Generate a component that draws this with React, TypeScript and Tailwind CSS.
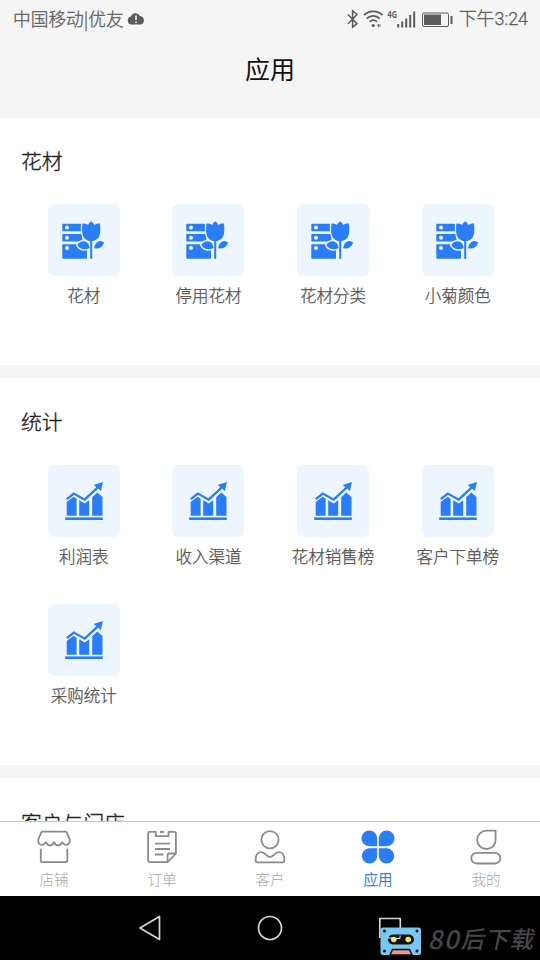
import type { ReactNode } from 'react';

type IconProps = { className?: string };

const flowerPaths = [
  'M29.300 41c1.800-2.800 4-3.900 6.600-3.700 3.200.3 5.200 3 5.700 6.800-4.900 2.300-9.700 1.500-12.300-3.100Z',
  'M56.200 38.600c-1.700-1.300-3.400-1.800-5.200-1.300-2.700.7-4.400 3.500-4.900 6.900 4.500 1.300 8.200-.5 10.100-5.600Z',
  'M43.200 17.200c1.600 1.200 2.600 2.400 3.100 3.700 1.500-1 3.300-1.400 5.700-1.400.4 3.700.4 6.800.1 9.500-.6 4.800-3.900 8.200-8.900 8.200s-8.300-3.400-8.900-8.200c-.3-2.700-.3-5.800.1-9.500 2.400 0 4.200.4 5.700 1.400.5-1.300 1.500-2.500 3.100-3.700Z',
  'M42.200 36h2v18.800h-2Z',
];

function FlowerIcon() {
  return (
    <svg viewBox="0 0 72 72" className="h-[72px] w-[72px]" fill="#2a7df5">
      <rect x="14.300" y="19.800" width="19" height="7.400" rx="0.800" />
      <rect x="14.300" y="30.100" width="20" height="7.400" rx="0.800" />
      <rect x="14.300" y="40.300" width="24.700" height="14.500" rx="0.800" />
      <g fill="#edf6ff">
        <circle cx="19" cy="23.600" r="2" />
        <circle cx="19" cy="33.800" r="2" />
        <circle cx="19" cy="43.900" r="2" />
      </g>
      <g stroke="#edf6ff" strokeWidth="2.600" strokeLinejoin="round">
        {flowerPaths.map((d) => (
          <path key={d} d={d} />
        ))}
      </g>
      {flowerPaths.map((d) => (
        <path key={d} d={d} />
      ))}
    </svg>
  );
}

function ChartIcon() {
  return (
    <svg viewBox="0 0 72 72" className="h-[72px] w-[72px]" fill="#2a7df5">
      <path d="M18.700 37 25.600 31.800l3 2V50.700h-9.900Z" />
      <path d="M31.200 35.300l5.500 3.200 4.500-3.200v15.400h-10Z" />
      <path d="M44.200 32.200l5.100-4.800 5.200 4.600v18.700H44.200Z" />
      <rect x="17.200" y="52.400" width="37.600" height="2.600" />
      <path d="M18.800 34.200 25.800 28.600 36.700 34.700 50.600 21.600" fill="none" stroke="#2a7df5" strokeWidth="2.300" />
      <path d="M54.900 17.100 45.700 20l7.300 5.900Z" />
    </svg>
  );
}

function ShopIcon({ className }: IconProps) {
  return (
    <svg viewBox="0 0 36 36" className={className} fill="none" stroke="currentColor" strokeWidth="1.800" strokeLinejoin="round" strokeLinecap="round">
      <path d="M6.700 2.700h22.600c.7 0 1.200.3 1.500.9l2.900 6.800c.6 3.500-1.200 5.400-3.500 5.400-1.800 0-3-1-4-2.600-1.400 2.300-2.500 3.300-4.100 3.300-1.700 0-2.800-1-4.100-3.300-1.300 2.300-2.400 3.300-4.100 3.300-1.600 0-2.700-1-4.100-3.300-1 1.600-2.200 2.600-4 2.600-2.300 0-4.100-1.900-3.500-5.400l2.900-6.800c.3-.6.800-.9 1.500-.9Z" />
      <path d="M4.800 20.500v11.500c0 .7.400 1.100 1.100 1.100h24.300c.7 0 1.100-.4 1.100-1.100V20.500" />
    </svg>
  );
}

function OrderIcon({ className }: IconProps) {
  return (
    <svg viewBox="0 0 36 36" className={className} fill="none" stroke="currentColor" strokeWidth="1.800" strokeLinejoin="round">
      <path d="M11.700 8V2.800H5.600c-1 0-1.500.5-1.500 1.500v27.300c0 1 .5 1.500 1.500 1.500h18l8.300-8.500V4.300c0-1-.5-1.500-1.500-1.500h-5.900V8M10.800 7.200h14.500M16 3h4" />
      <path d="M31.700 24.500h-6.600c-1 0-1.500.5-1.500 1.500v6.900M11 14.600h15M11 20h15M11 25.500h8.500" />
    </svg>
  );
}

function CustomerIcon({ className }: IconProps) {
  return (
    <svg viewBox="0 0 36 36" className={className} fill="none" stroke="currentColor" strokeWidth="1.800" strokeLinejoin="round">
      <circle cx="18" cy="10.700" r="8.600" />
      <path d="M9.300 23.200c3.800 0 5.200 4.900 8.700 4.900s4.900-4.900 8.700-4.900c3.400 0 5.600 3 5.600 6.500v2c0 1-.6 1.600-1.600 1.600H5.300c-1 0-1.600-.6-1.600-1.600v-2c0-3.500 2.200-6.500 5.600-6.500Z" />
    </svg>
  );
}

function AppsIcon({ className }: IconProps) {
  return (
    <svg viewBox="0 0 36 36" className={className} fill="currentColor">
      <path d="M17.200 17.200H9.100a7.900 7.900 0 1 1 8.100-7.900Z" />
      <path d="M18.800 17.200h8.100a7.900 7.900 0 1 0-8.100-7.900Z" />
      <path d="M17.200 19.200H9.100a7.700 7.700 0 1 0 8.100 7.700Z" />
      <path d="M18.800 19.200h8.100a7.700 7.700 0 1 1-8.100 7.700Z" />
    </svg>
  );
}

function MineIcon({ className }: IconProps) {
  return (
    <svg viewBox="0 0 36 36" className={className} fill="none" stroke="currentColor" strokeWidth="1.800" strokeLinejoin="round">
      <path d="M27.600 1.600V10.800a9.200 9.200 0 1 1-9.200-9.200Z" />
      <rect x="3.300" y="23.800" width="29" height="10.700" rx="5.350" />
    </svg>
  );
}

const sections = [
  { title: '花材', icon: <FlowerIcon />, size: 'h-[247px] pt-[26px]', items: ['花材', '停用花材', '花材分类', '小菊颜色'] },
  {
    title: '统计',
    icon: <ChartIcon />,
    size: 'h-[387px] pt-[27px]',
    items: ['利润表', '收入渠道', '花材销售榜', '客户下单榜', '采购统计'],
  },
];

const tabs = [
  { label: '店铺', Icon: ShopIcon },
  { label: '订单', Icon: OrderIcon },
  { label: '客户', Icon: CustomerIcon },
  { label: '应用', Icon: AppsIcon, active: true },
  { label: '我的', Icon: MineIcon },
];

function StatusBar() {
  return (
    <div className="flex h-[37px] items-center justify-between pr-3 pl-[13px] text-[#5c5c5c]">
      <div className="flex items-center gap-[3px]">
        <span className="text-[17.700px] leading-none font-light [-webkit-text-stroke:0.3px]">中国移动|优友</span>
        <svg viewBox="0 0 18 13" className="h-[13px] w-[18px]">
          <path d="M4.500 12.500a4 4 0 0 1-.6-7.900A5 5 0 0 1 13 3.900a4.400 4.400 0 0 1 .7 8.600Z" fill="currentColor" />
          <path d="M9 3.500v4.600M9 9.500v1.500" stroke="#f5f5f5" strokeWidth="1.600" />
        </svg>
      </div>
      <div className="flex items-center">
        <svg viewBox="0 0 108 22" className="h-[22px] w-[108px]" fill="none" stroke="currentColor">
          <path d="M2 6.500l9 9.200-4.400 3.500V2.800L11 6.500l-9 9.200" strokeWidth="1.500" />
          <path d="M18 7.200c5-5 13.500-5 18.500 0M20.700 10.600c3.800-3.700 9.300-3.700 13 0M23.600 13.800c2.200-2 5.100-2 7.300 0" strokeWidth="1.700" />
          <circle cx="27.200" cy="17.500" r="1.600" fill="currentColor" stroke="none" />
          <path d="M31 18l1.500-2v3.500M34 16v3" strokeWidth="0.800" />
          <text x="41.500" y="10" fontSize="9" fontWeight="700" fill="currentColor" stroke="none" textLength="9.500" lengthAdjust="spacingAndGlyphs">4G</text>
          <path d="M52.200 16v3.500M56.200 13.500v6M60.200 10.500v9M64.200 7v12.500M68.200 3.500v16" strokeWidth="2" />
          <rect x="76.500" y="5" width="26" height="13.500" rx="1.500" strokeWidth="1" />
          <rect x="78" y="6.500" width="17" height="10.500" fill="currentColor" stroke="none" />
          <path d="M105.500 8v8" strokeWidth="2" />
        </svg>
        <span className="ml-[5px] pt-px font-['Roboto','Noto_Sans_CJK_SC',sans-serif] text-[17.900px] leading-none font-light [-webkit-text-stroke:0.3px]">
          下午3:24
        </span>
      </div>
    </div>
  );
}

function Section({ title, size, children }: { title: string; size: string; children?: ReactNode }) {
  return (
    <section className={`shrink-0 bg-white ${size}`}>
      <h2 className="pl-[21px] text-[20.800px] leading-8 font-light text-[#222] [-webkit-text-stroke:0.35px]">{title}</h2>
      <div className="mt-[28px] grid grid-cols-4 gap-y-[32px] pr-5 pl-[21.500px]">{children}</div>
    </section>
  );
}

function SystemNav() {
  return (
    <div className="relative h-16 shrink-0 bg-black">
      <svg viewBox="0 0 540 64" className="h-16 w-[540px]" fill="none" stroke="#d6d6d6" strokeWidth="1.700" strokeLinejoin="round">
        <path d="M140 32l19.500-11.500v23Z" />
        <circle cx="270" cy="32" r="11.500" />
        <path d="M379.800 42V22.500h20.500v12" />
      </svg>
      <div className="absolute top-[31px] left-[380px] flex items-start">
        <svg viewBox="0 0 42 29" className="h-[29px] w-[42px]">
          <rect x="0.500" y="0.500" width="40.500" height="27.500" rx="2.500" fill="#79c8f2" />
          <rect x="8" y="7.500" width="26" height="10" rx="5" fill="#111" />
          <path d="M10 28l2.500-5.500h17L32 28Z" fill="#ef9485" stroke="#111" strokeWidth="1.500" />
          <circle cx="13.800" cy="12.500" r="2.800" fill="#ffe34d" />
          <circle cx="28.200" cy="12.500" r="2.800" fill="#ffe34d" />
          <path d="M8 11h7M20 8.500v3h-4" stroke="#eee" strokeWidth="1" fill="none" />
          <g fill="#111">
            <circle cx="4.500" cy="4" r="1.500" />
            <circle cx="37" cy="4" r="1.500" />
            <circle cx="4.500" cy="24" r="1.500" />
            <circle cx="37" cy="24" r="1.500" />
          </g>
        </svg>
        <span className="-mt-[2px] ml-2 flex -skew-x-12 text-[23.500px] leading-[26px] font-medium whitespace-nowrap text-[#464646]">
          <span className="text-[26px] tracking-[1.500px]">80</span>
          <span className="tracking-[1px]">后下载</span>
        </span>
      </div>
    </div>
  );
}

export default function App() {
  return (
    <div className="flex h-[960px] w-[540px] flex-col overflow-hidden bg-[#f5f5f5] font-['Noto_Sans_CJK_SC',sans-serif]">
      <header className="h-[118px] shrink-0">
        <StatusBar />
        <h1 className="pt-[13px] text-center text-[25px] leading-9 text-[#111]">应用</h1>
      </header>

      <main className="flex h-[703px] shrink-0 flex-col gap-[13px] overflow-hidden">
        {sections.map(({ title, icon, size, items }) => (
          <Section key={title} title={title} size={size}>
            {items.map((label) => (
              <div key={label} className="flex flex-col items-center">
                <div className="h-[72px] w-[72px] rounded-md bg-[#edf6ff]">{icon}</div>
                <span className="mt-[5px] mb-[2px] text-[16.500px] leading-7 font-light whitespace-nowrap text-[#505050] [-webkit-text-stroke:0.25px]">
                  {label}
                </span>
              </div>
            ))}
          </Section>
        ))}
        <Section title="客户与门店" size="h-[60px] pt-[28px]" />
      </main>

      <nav className="grid h-[75px] shrink-0 grid-cols-5 border-t border-[#c8c8c8] bg-white">
        {tabs.map(({ label, Icon, active }) => (
          <div
            key={label}
            className={`flex flex-col items-center pt-[7px] ${active ? 'text-[#2a7df5]' : 'text-[#8b8b8b]'}`}
          >
            <Icon className="h-9 w-9" />
            <span
              className={`mt-[3px] text-[14.500px] leading-[22px] font-light ${active ? 'text-[#2a6fd0] [-webkit-text-stroke:0.25px]' : 'text-[#a8a8a8]'}`}
            >
              {label}
            </span>
          </div>
        ))}
      </nav>

      <SystemNav />
    </div>
  );
}
